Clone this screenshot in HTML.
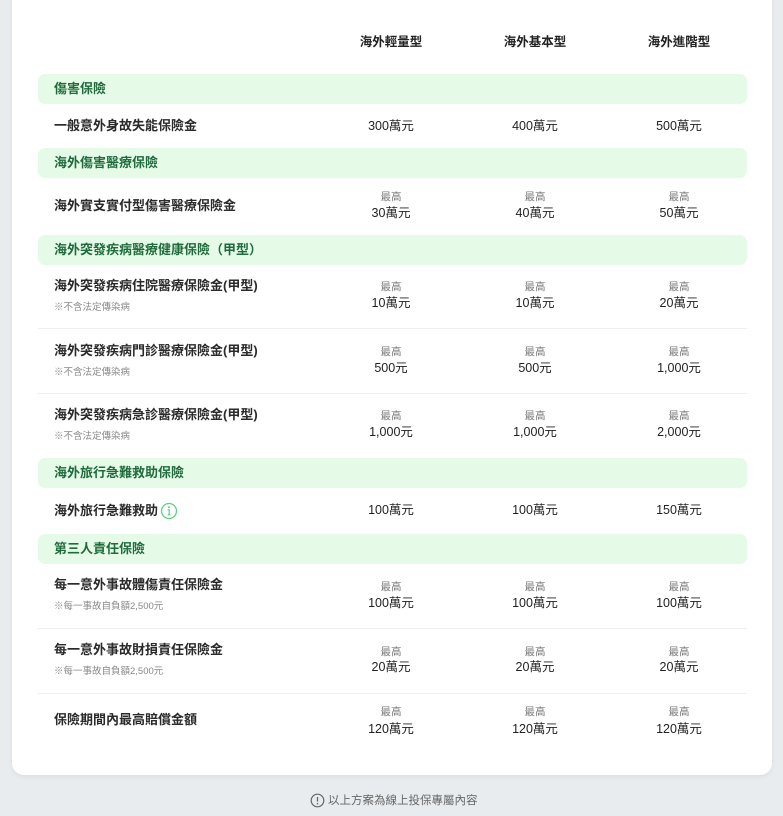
<!DOCTYPE html>
<html><head><meta charset="utf-8"><style>
*{margin:0;padding:0;box-sizing:border-box}
body{width:783px;height:816px;background:#e9ecef;font-family:"Liberation Sans","Noto Sans CJK TC",sans-serif;position:relative;overflow:hidden;color:#222}
.card{position:absolute;left:12px;top:-10px;width:760px;height:785px;background:#fff;border-radius:12px;box-shadow:0 2px 6px rgba(0,0,0,.06)}
.a{position:absolute;white-space:nowrap}
.sec{position:absolute;left:38px;width:709px;height:30px;background:#e6fbe7;border-radius:7px;color:#1f6b3c;font-size:13px;font-weight:bold;line-height:30px;padding-left:16px}
.lb{position:absolute;left:54px;font-size:13px;font-weight:bold;color:#2a2a2a;line-height:16px;white-space:nowrap}
.nt{position:absolute;left:54px;font-size:9.5px;color:#888;line-height:12px;white-space:nowrap}
.c{position:absolute;width:140px;text-align:center;white-space:nowrap}
.v{font-size:12.5px;color:#222;line-height:14px}
.m{font-size:10.5px;color:#777;line-height:12px}
.h{font-size:12.5px;font-weight:bold;color:#222;line-height:16px}
.dv{position:absolute;left:38px;width:709px;height:1px;background:#eef0f0}
</style></head><body>
<div class="card"></div>

<div class="c h" style="left:321px;top:34px">海外輕量型</div>
<div class="c h" style="left:465px;top:34px">海外基本型</div>
<div class="c h" style="left:609px;top:34px">海外進階型</div>

<div class="sec" style="top:74px">傷害保險</div>
<div class="lb" style="top:118px">一般意外身故失能保險金</div>
<div class="c v" style="left:321px;top:119px">300萬元</div>
<div class="c v" style="left:465px;top:119px">400萬元</div>
<div class="c v" style="left:609px;top:119px">500萬元</div>

<div class="sec" style="top:148px">海外傷害醫療保險</div>
<div class="lb" style="top:198px">海外實支實付型傷害醫療保險金</div>
<div class="c m" style="left:321px;top:191px">最高</div><div class="c v" style="left:321px;top:206px">30萬元</div>
<div class="c m" style="left:465px;top:191px">最高</div><div class="c v" style="left:465px;top:206px">40萬元</div>
<div class="c m" style="left:609px;top:191px">最高</div><div class="c v" style="left:609px;top:206px">50萬元</div>

<div class="sec" style="top:235px">海外突發疾病醫療健康保險（甲型）</div>
<div class="lb" style="top:278px">海外突發疾病住院醫療保險金(甲型)</div>
<div class="nt" style="top:302px">※不含法定傳染病</div>
<div class="c m" style="left:321px;top:281px">最高</div><div class="c v" style="left:321px;top:296px">10萬元</div>
<div class="c m" style="left:465px;top:281px">最高</div><div class="c v" style="left:465px;top:296px">10萬元</div>
<div class="c m" style="left:609px;top:281px">最高</div><div class="c v" style="left:609px;top:296px">20萬元</div>
<div class="dv" style="top:328px"></div>

<div class="lb" style="top:343px">海外突發疾病門診醫療保險金(甲型)</div>
<div class="nt" style="top:367px">※不含法定傳染病</div>
<div class="c m" style="left:321px;top:346px">最高</div><div class="c v" style="left:321px;top:361px">500元</div>
<div class="c m" style="left:465px;top:346px">最高</div><div class="c v" style="left:465px;top:361px">500元</div>
<div class="c m" style="left:609px;top:346px">最高</div><div class="c v" style="left:609px;top:361px">1,000元</div>
<div class="dv" style="top:393px"></div>

<div class="lb" style="top:407px">海外突發疾病急診醫療保險金(甲型)</div>
<div class="nt" style="top:431px">※不含法定傳染病</div>
<div class="c m" style="left:321px;top:410px">最高</div><div class="c v" style="left:321px;top:425px">1,000元</div>
<div class="c m" style="left:465px;top:410px">最高</div><div class="c v" style="left:465px;top:425px">1,000元</div>
<div class="c m" style="left:609px;top:410px">最高</div><div class="c v" style="left:609px;top:425px">2,000元</div>

<div class="sec" style="top:458px">海外旅行急難救助保險</div>
<div class="lb" style="top:503px">海外旅行急難救助</div>
<svg class="a" style="left:160px;top:502px" width="18" height="18" viewBox="0 0 18 18"><circle cx="9" cy="9" r="7.5" fill="none" stroke="#5ccf82" stroke-width="1.3"/><circle cx="9" cy="5.3" r="1" fill="#5ccf82"/><path d="M7.6 7.8H9.2V12.6M7.6 12.8H10.6" stroke="#5ccf82" stroke-width="1.2" fill="none"/></svg>
<div class="c v" style="left:321px;top:503px">100萬元</div>
<div class="c v" style="left:465px;top:503px">100萬元</div>
<div class="c v" style="left:609px;top:503px">150萬元</div>

<div class="sec" style="top:534px">第三人責任保險</div>
<div class="lb" style="top:577px">每一意外事故體傷責任保險金</div>
<div class="nt" style="top:601px">※每一事故自負額2,500元</div>
<div class="c m" style="left:321px;top:581px">最高</div><div class="c v" style="left:321px;top:596px">100萬元</div>
<div class="c m" style="left:465px;top:581px">最高</div><div class="c v" style="left:465px;top:596px">100萬元</div>
<div class="c m" style="left:609px;top:581px">最高</div><div class="c v" style="left:609px;top:596px">100萬元</div>
<div class="dv" style="top:628px"></div>

<div class="lb" style="top:642px">每一意外事故財損責任保險金</div>
<div class="nt" style="top:666px">※每一事故自負額2,500元</div>
<div class="c m" style="left:321px;top:646px">最高</div><div class="c v" style="left:321px;top:660px">20萬元</div>
<div class="c m" style="left:465px;top:646px">最高</div><div class="c v" style="left:465px;top:660px">20萬元</div>
<div class="c m" style="left:609px;top:646px">最高</div><div class="c v" style="left:609px;top:660px">20萬元</div>
<div class="dv" style="top:693px"></div>

<div class="lb" style="top:712px">保險期間內最高賠償金額</div>
<div class="c m" style="left:321px;top:706px">最高</div><div class="c v" style="left:321px;top:722px">120萬元</div>
<div class="c m" style="left:465px;top:706px">最高</div><div class="c v" style="left:465px;top:722px">120萬元</div>
<div class="c m" style="left:609px;top:706px">最高</div><div class="c v" style="left:609px;top:722px">120萬元</div>

<svg class="a" style="left:310px;top:793px" width="15" height="15" viewBox="0 0 15 15"><circle cx="7.5" cy="7.5" r="6.3" fill="none" stroke="#666" stroke-width="1.2"/><path d="M7.5 4V8.6" stroke="#666" stroke-width="1.3"/><circle cx="7.5" cy="10.7" r=".8" fill="#666"/></svg>
<div class="a" style="left:328px;top:794px;font-size:11.5px;color:#666;line-height:14px">以上方案為線上投保專屬內容</div>
</body></html>
